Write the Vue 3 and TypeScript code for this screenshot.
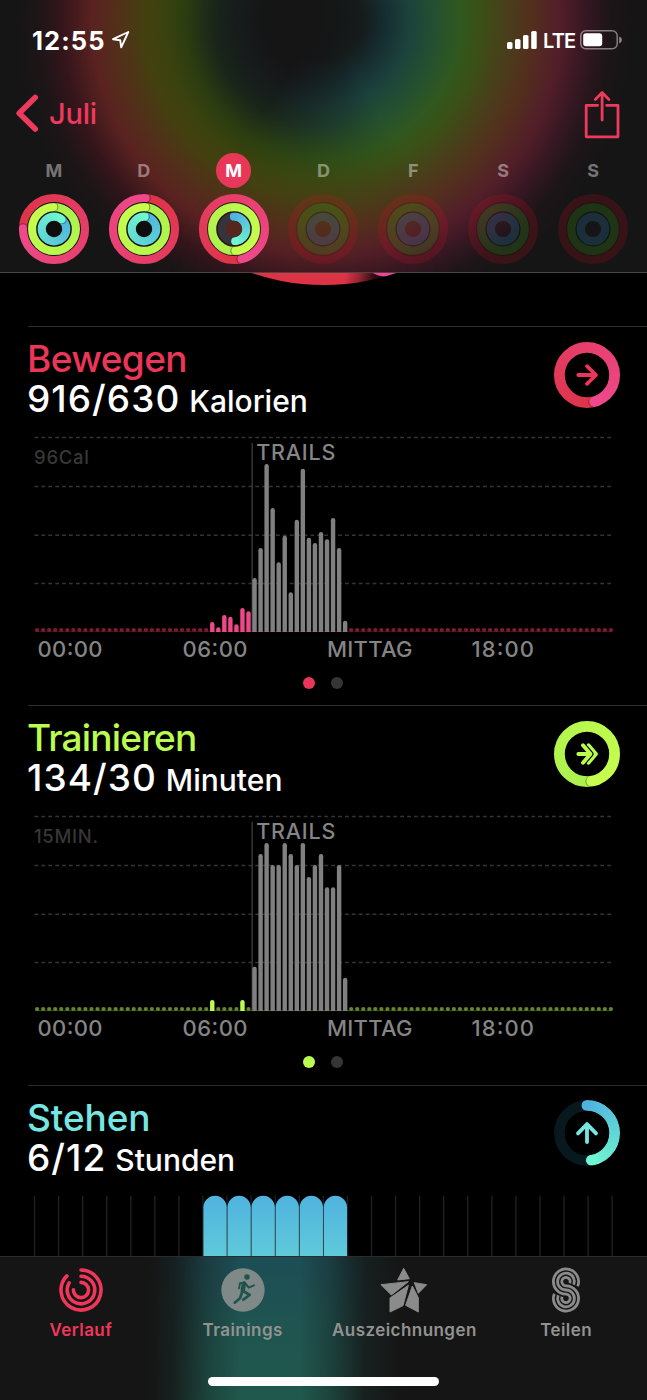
<script setup lang="ts">
type RGB = [number, number, number]
interface Segment { d: string; color: string }
interface RingSpec { r: number; end: number; full: boolean; from: RGB; to: RGB; base: string }
interface Ring extends RingSpec { segments: Segment[]; width: number; tip: [number, number]; shade: [number, number]; start: [number, number] }
interface Bar { index: number; height: number; color: string }

const MOVE: [RGB, RGB] = [[221, 52, 70], [238, 73, 140]]
const EXERCISE: [RGB, RGB] = [[170, 240, 78], [200, 255, 78]]
const STAND: [RGB, RGB] = [[80, 180, 222], [112, 246, 208]]

const point = (r: number, deg: number): [number, number] => {
  const a = (deg * Math.PI) / 180
  return [r * Math.sin(a), -r * Math.cos(a)]
}
const fmt = (p: [number, number]) => `${p[0].toFixed(3)} ${p[1].toFixed(3)}`
const mix = (a: RGB, b: RGB, t: number) => `rgb(${a.map((v, i) => Math.round(v + (b[i] - v) * t)).join(',')})`

function arc(r: number, a: number, b: number): string {
  return `M${fmt(point(r, a))}A${r} ${r} 0 ${b - a > 180 ? 1 : 0} 1 ${fmt(point(r, b))}`
}

function buildRing(spec: RingSpec, width: number): Ring {
  const first = spec.full ? spec.end - 360 : 0
  const span = spec.end - first
  const count = 60
  const segments: Segment[] = []
  for (let i = 0; i < count; i++) {
    const a = first + (span * i) / count
    const b = first + (span * (i + 1)) / count
    segments.push({ d: arc(spec.r, a, Math.min(b + 4, spec.end)), color: mix(spec.from, spec.to, i / (count - 1)) })
  }
  return { ...spec, segments, width, tip: point(spec.r, spec.end), shade: point(spec.r, spec.end + 60 / spec.r), start: point(spec.r, 0) }
}

function spec(r: number, end: number, full: boolean, palette: [RGB, RGB], base = 'none'): RingSpec {
  return { r, end, full, from: palette[0], to: palette[1], base }
}

function dayRings(move: number, exercise: number, stand: number, standFull: boolean): Ring[] {
  return [
    buildRing(spec(31, move, true, MOVE), 8.2),
    buildRing(spec(21.9, exercise, true, EXERCISE), 8.2),
    buildRing(spec(12.3, stand, standFull, STAND, 'rgba(62,74,88,.6)'), 8.2),
  ]
}

const days = [
  { label: 'M', rings: dayRings(271, 358, 38, true), selected: false },
  { label: 'D', rings: dayRings(363, 363, 363, true), selected: false },
  { label: 'M', rings: dayRings(166, 176, 174, false), selected: true },
  { label: 'D', rings: [], selected: false },
  { label: 'F', rings: [], selected: false },
  { label: 'S', rings: [], selected: false },
  { label: 'S', rings: [], selected: false },
]

const moveHeights = [10, 4.7, 17, 15.3, 7.7, 24, 20.7, 54, 84, 168, 124, 69.7, 96.3, 39.7, 112.3, 163.3, 94.3, 89, 100, 92.7, 114, 84, 11.3]
const exerciseHeights = [11, 0, 0, 0, 0, 11, 0, 44.3, 157, 168, 146, 146, 168, 157, 146, 168, 134, 146, 157, 123.7, 123.7, 146, 33.3]
const FIRST = 29
const WORKOUT = 36

function bars(heights: number[], color: string): Bar[] {
  return heights
    .map((height, i) => ({ index: i + FIRST, height, color: i + FIRST >= WORKOUT ? '#808080' : color }))
    .filter((b) => b.height > 0)
}
function idle(list: Bar[]): number[] {
  const used = new Set(list.map((b) => b.index))
  return Array.from({ length: 96 }, (_, i) => i).filter((i) => !used.has(i))
}
const slot = (i: number) => 37.1 + i * 6.04

const moveBars = bars(moveHeights, '#f0468a')
const exerciseBars = bars(exerciseHeights, '#bdfc4f')

const sections = [
  {
    id: 'move', title: 'Bewegen', value: '916/630', unit: 'Kalorien', dot: '#7d1c31',
    scale: '96Cal', scaleWidth: 55, bars: moveBars, idle: idle(moveBars),
    ring: buildRing(spec(27.6, 164, true, MOVE), 10.8),
  },
  {
    id: 'exercise', title: 'Trainieren', value: '134/30', unit: 'Minuten', dot: '#66862b',
    scale: '15MIN.', scaleWidth: 64, bars: exerciseBars, idle: idle(exerciseBars),
    ring: buildRing(spec(27.6, 170, true, EXERCISE), 10.8),
  },
  {
    id: 'stand', title: 'Stehen', value: '6/12', unit: 'Stunden', dot: '', scale: '', scaleWidth: 0,
    bars: [] as Bar[], idle: [] as number[],
    ring: buildRing(spec(27.6, 171, false, STAND, '#07191f'), 10.8),
  },
]

const axis = [
  { text: '00:00', x: 37.5, w: 65 },
  { text: '06:00', x: 182.5, w: 65 },
  { text: 'MITTAG', x: 327, w: 85.5 },
  { text: '18:00', x: 471.5, w: 62.5 },
]
const hours = Array.from({ length: 25 }, (_, i) => 34.5 + i * 24.07)
const standHours = [7, 8, 9, 10, 11, 12]

const tabs = [
  { id: 'history', label: 'Verlauf' },
  { id: 'workouts', label: 'Trainings' },
  { id: 'awards', label: 'Auszeichnungen' },
  { id: 'share', label: 'Teilen' },
]

const historyArcs = [arc(20, 0, 315), arc(13.8, 0, 301), arc(7.6, 0, 272)]
const shareTracks = [12.6, 8.4, 4.2].map((ra) => {
  const rb = 16.8 - ra
  const s = point(ra, 112)
  const e = point(rb, 292)
  return `M${s[0].toFixed(2)} ${(s[1] - 8.4).toFixed(2)}A${ra} ${ra} 0 1 0 0 ${(ra - 8.4).toFixed(2)}A${rb} ${rb} 0 1 1 ${e[0].toFixed(2)} ${(e[1] + 8.4).toFixed(2)}`
})
</script>

<template>
  <div class="phone">
    <header class="header">
      <div class="status">
        <span class="clock">12:55</span>
        <svg class="locate" width="20" height="20" viewBox="0 0 20 20"><path d="M2 9.2 17.3 2 10.2 17.3 9.2 10.2Z" /></svg>
        <svg class="signal" width="31" height="20" viewBox="0 0 31 20">
          <rect x="0" y="12" width="5.5" height="7" rx="1.6" /><rect x="8" y="9" width="5.5" height="10" rx="1.6" />
          <rect x="16" y="5" width="5.5" height="14" rx="1.6" /><rect x="24.2" y="1" width="5.5" height="18" rx="1.6" />
        </svg>
        <span class="carrier">LTE</span>
        <svg class="battery" width="43" height="20" viewBox="0 0 43 20">
          <rect x=".8" y=".8" width="36.4" height="18" rx="5" fill="none" stroke="#fff" stroke-opacity=".45" stroke-width="1.5" />
          <rect x="3.2" y="3.3" width="19" height="13" rx="2.8" fill="#fff" />
          <path d="M39.2 6.6q2.7 1 2.7 3.4t-2.7 3.4z" fill="#fff" fill-opacity=".5" />
        </svg>
      </div>

      <nav class="navbar">
        <a class="back">
          <svg width="26" height="42" viewBox="0 0 26 42"><path d="M20.2 5.5 4.2 21.3 20.2 37" /></svg>
          <span>Juli</span>
        </a>
        <svg class="export" width="38" height="50" viewBox="0 0 38 50">
          <path d="M14.6 15.4H3.2V46.8H35V15.4H23.6M19.1 30V3M12.3 9.4 19.1 2.6 25.9 9.4" />
        </svg>
      </nav>

      <div class="week">
        <div v-for="(day, i) in days" :key="i" class="day">
          <span class="letter" :class="{ selected: day.selected }">{{ day.label }}</span>
          <svg width="72" height="72" viewBox="-36 -36 72 72">
            <template v-if="day.rings.length">
              <circle r="28" :fill="day.selected ? '#2a1516' : '#0d0e0d'" />
              <circle v-if="day.selected" r="8.5" fill="#54261d" />
              <g v-for="(ring, n) in day.rings" :key="n" fill="none">
                <mask :id="`day-${i}-${n}`" maskUnits="userSpaceOnUse" x="-36" y="-36" width="72" height="72">
                  <circle :r="ring.r" fill="none" stroke="#fff" :stroke-width="ring.width" />
                </mask>
                <g :mask="`url(#day-${i}-${n})`" :stroke-width="ring.full ? ring.width + 2 : ring.width">
                  <circle v-if="!ring.full" :r="ring.r" :stroke="ring.base" />
                  <circle v-if="!ring.full" :cx="ring.start[0]" :cy="ring.start[1]" :r="ring.width / 2" :fill="ring.segments[0].color" stroke="none" />
                  <path v-for="(s, k) in ring.segments" :key="k" :d="s.d" :stroke="s.color" />
                  <circle v-if="ring.full" :cx="ring.shade[0]" :cy="ring.shade[1]" :r="ring.width / 2" fill="#000" fill-opacity=".35" stroke="none" />
                  <circle :cx="ring.tip[0]" :cy="ring.tip[1]" :r="ring.width / 2" :fill="ring.segments[59].color" stroke="none" />
                </g>
              </g>
            </template>
            <g v-else fill="none">
              <circle r="30.7" stroke="rgba(235,15,40,.16)" stroke-width="8.6" />
              <circle r="26.4" stroke="rgba(0,0,0,.12)" stroke-width="1.6" />
              <circle r="21.7" stroke="rgba(65,170,25,.21)" stroke-width="8.6" />
              <circle r="16.8" stroke="rgba(0,0,0,.22)" stroke-width="1.4" />
              <circle r="12.3" stroke="rgba(45,140,185,.22)" stroke-width="8.4" />
            </g>
          </svg>
        </div>
      </div>
    </header>

    <main class="content">
      <svg class="peek" width="647" height="54" viewBox="0 272 647 54">
        <defs>
          <linearGradient id="fade" gradientUnits="userSpaceOnUse" x1="347" y1="270" x2="376" y2="276">
            <stop offset="0" stop-color="#dc3345" /><stop offset=".45" stop-color="#9c2534" /><stop offset="1" stop-color="#2a0a0f" />
          </linearGradient>
          <clipPath id="disc"><circle cx="324" cy="55.2" r="229" /></clipPath>
        </defs>
        <circle cx="324" cy="55.2" r="229" fill="url(#fade)" />
        <ellipse cx="387.5" cy="261.5" rx="21" ry="14" fill="#f04590" clip-path="url(#disc)" />
      </svg>

      <section v-for="s in sections" :key="s.id" class="card">
        <div class="heading">
          <div>
            <h2 :class="s.id">{{ s.title }}</h2>
            <p>{{ s.value }} <small>{{ s.unit }}</small></p>
          </div>
          <svg class="goal" width="68" height="68" viewBox="-34 -34 68 68">
            <mask :id="`goal-${s.id}`" maskUnits="userSpaceOnUse" x="-34" y="-34" width="68" height="68">
              <circle :r="s.ring.r" fill="none" stroke="#fff" :stroke-width="s.ring.width" />
            </mask>
            <g fill="none" :mask="`url(#goal-${s.id})`" :stroke-width="s.ring.full ? s.ring.width + 2 : s.ring.width">
              <circle v-if="!s.ring.full" :r="s.ring.r" :stroke="s.ring.base" />
              <circle v-if="!s.ring.full" :cx="s.ring.start[0]" :cy="s.ring.start[1]" r="5.4" :fill="s.ring.segments[0].color" stroke="none" />
              <path v-for="(g, k) in s.ring.segments" :key="k" :d="g.d" :stroke="g.color" />
              <circle v-if="s.ring.full" :cx="s.ring.shade[0]" :cy="s.ring.shade[1]" r="5.4" fill="#000" fill-opacity=".3" stroke="none" />
              <circle :cx="s.ring.tip[0]" :cy="s.ring.tip[1]" r="5.4" :fill="s.ring.segments[59].color" stroke="none" />
            </g>
            <g class="arrow" :class="s.id">
              <path v-if="s.id === 'move'" d="M-8.7 0H8.5M0-8.8 9 0 0 8.8" />
              <template v-else-if="s.id === 'exercise'">
                <path d="M1.5-8.8 9 0 1.5 8.8" />
                <path d="M-4-8.8 3.5 0-4 8.8" class="cut" />
                <path d="M-8.7 0H3M-4-8.8 3.5 0-4 8.8" />
              </template>
              <path v-else d="M0 9V-8.5M-9 .4 0-8.9 9 .4" />
            </g>
          </svg>
        </div>

        <svg v-if="s.scale" class="chart" width="647" height="240" viewBox="0 418 647 240">
          <path class="grid" d="M34.5 437.5H611M34.5 486.5H611M34.5 535.2H611M34.5 583.5H611" />
          <path class="marker" d="M252.2 443V632" />
          <text class="scale" x="34" y="464.4" :textLength="s.scaleWidth">{{ s.scale }}</text>
          <text class="workout" x="256.3" y="459.8" textLength="79">TRAILS</text>
          <circle v-for="i in s.idle" :key="i" :cx="slot(i)" cy="630" r="2.1" :fill="s.dot" />
          <path d="M35 631.6H612" :stroke="s.dot" stroke-width="1" stroke-opacity=".55" />
          <path
            v-for="b in s.bars" :key="b.index" :fill="b.color"
            :d="`M${slot(b.index) - 2.2} 632V${634.2 - b.height}q0-2.2 2.2-2.2t2.2 2.2V632z`"
          />
          <text v-for="a in axis" :key="a.text" class="tick" :x="a.x" y="657.2" :textLength="a.w">{{ a.text }}</text>
        </svg>
        <div v-if="s.scale" class="pager"><i :class="s.id"></i><i></i></div>

        <svg v-else class="chart" width="647" height="84" viewBox="0 1177.2 647 84">
          <defs>
            <linearGradient id="stand" gradientUnits="userSpaceOnUse" x1="0" y1="1196" x2="0" y2="1257">
              <stop offset="0" stop-color="#50b3de" /><stop offset="1" stop-color="#5fcada" />
            </linearGradient>
          </defs>
          <path v-for="x in hours" :key="x" class="hour" :d="`M${x} 1196V1262`" />
          <path v-for="h in standHours" :key="h" fill="url(#stand)" :d="`M${hours[h] + 0.4} 1262V1207.5a11.65 11.5 0 0 1 23.3 0V1262z`" />
        </svg>
      </section>
    </main>

    <footer class="footer">
      <nav class="tabs">
        <a v-for="tab in tabs" :key="tab.id" class="tab" :class="[tab.id, { active: tab.id === 'history' }]">
          <svg v-if="tab.id === 'history'" width="48" height="48" viewBox="-24 -24 48 48">
            <path v-for="d in historyArcs" :key="d" :d="d" fill="none" stroke="#f0375a" stroke-width="3.6" stroke-linecap="round" />
          </svg>
          <svg v-else-if="tab.id === 'workouts'" width="48" height="48" viewBox="-72 -72 144 144">
            <circle r="65" fill="#7f8988" />
            <circle cx="12" cy="-39" r="8.3" fill="#205350" />
            <g fill="none" stroke="#205350" stroke-linecap="round" stroke-linejoin="round">
              <path d="M3-20-1 2" stroke-width="13" />
              <path d="M4-22-9-20-12-5M7-20 17-7 33-14" stroke-width="6" />
              <path d="M1 3 20 15 1 29M-2 4-9 25-25 38" stroke-width="8" />
            </g>
          </svg>
          <svg v-else-if="tab.id === 'awards'" width="50" height="48" viewBox="166 48 150 144">
            <g fill="#8b8b8b" stroke="#8b8b8b" stroke-width="3" stroke-linejoin="round">
              <path d="M240 55 257 86 222 90ZM172 104 254 95 203 135ZM254 106 199 144V186L238 167ZM272 98 309 104 284 130ZM266 108 284 143 284 186 246 166Z" />
            </g>
          </svg>
          <svg v-else width="48" height="48" viewBox="-24 -24 48 48">
            <path v-for="d in shareTracks" :key="d" :d="d" fill="none" stroke="#8b8b8b" stroke-width="2.8" />
          </svg>
          <span>{{ tab.label }}</span>
        </a>
      </nav>
      <div class="home"></div>
    </footer>
  </div>
</template>

<style>
html, body { margin: 0; background: #000; }
</style>

<style scoped>
.phone {
  width: 647px; height: 1400px; overflow: hidden; display: flex; flex-direction: column;
  background: #000; color: #fff; font-family: Inter, "Liberation Sans", sans-serif;
}
.header {
  position: relative; isolation: isolate; box-sizing: border-box; height: 273px; flex: none; overflow: hidden;
  border-bottom: 1px solid #4a4444;
  background: radial-gradient(circle at 324px 20px, #151515 0, #151516 60px, #161b1b 85px, #19241a 109px, #2c3d10 139px, #3a420f 159px, #43400f 179px, #52301a 206px, #5a2220 232px, #34151b 262px, #1d1517 286px, #151515 312px);
}
.header::before {
  content: ""; position: absolute; inset: 0; z-index: -1;
  background: radial-gradient(circle at 324px 20px, #151515 0, #151a1a 38px, #162e31 62px, #1c423c 86px, #255030 112px, #30581f 137px, #3b5016 157px, #46421a 177px, #53301d 206px, #521e29 236px, #351722 262px, #1c1518 286px, #151515 312px);
  -webkit-mask-image: conic-gradient(from 0deg at 324px 20px, #000 0deg, #000 150deg, transparent 215deg, transparent 350deg, #000 360deg);
  mask-image: conic-gradient(from 0deg at 324px 20px, #000 0deg, #000 150deg, transparent 215deg, transparent 350deg, #000 360deg);
}
.status { display: flex; align-items: center; height: 80px; padding: 0 25px 0 32px; box-sizing: border-box; }
.clock { font-size: 25.5px; font-weight: 700; letter-spacing: 1.1px; width: 79px; }
.locate { fill: none; stroke: #fff; stroke-width: 1.9; stroke-linejoin: round; }
.signal { margin-left: auto; fill: #fff; }
.carrier { font-size: 20px; font-weight: 600; letter-spacing: -.8px; margin: 0 6px 0 5px; width: 31px; line-height: 24px; padding-top: 1px; }
.battery { margin-right: -1px; }
.navbar { display: flex; justify-content: space-between; height: 70px; padding: 0 26.5px 0 15px; align-items: flex-start; }
.back { display: flex; align-items: center; height: 42px; margin-top: 12px; color: #ee3a5c; font-size: 29px; font-weight: 500; gap: 8px; letter-spacing: -.2px; }
.back svg { fill: none; stroke: #ee3a5c; stroke-width: 5.6; stroke-linecap: round; stroke-linejoin: round; }
.export { margin-top: 10px; fill: none; stroke: #ee3a5c; stroke-width: 2.8; stroke-linecap: round; stroke-linejoin: round; }
.week { display: flex; justify-content: space-between; padding: 0 9px; margin-top: 3px; }
.day { width: 89.8px; display: flex; flex-direction: column; align-items: center; gap: 5px; }
.letter { width: 35px; height: 35px; line-height: 35px; border-radius: 50%; text-align: center; font-size: 18px; font-weight: 700; color: rgba(255, 255, 255, .42); }
.letter.selected { background: #e93759; color: #fff; }
.content { flex: 1; min-height: 0; overflow: hidden; }
.peek { display: block; height: 53px; }
.card { box-sizing: border-box; height: 379.4px; }
.card::before { content: ""; display: block; height: 1px; margin-left: 28px; background: #2b2b2b; }
.heading { display: flex; justify-content: space-between; height: 91px; box-sizing: border-box; padding: 12px 26.5px 0 28px; }
h2, p { margin: 0; font-weight: 500; font-size: 37px; line-height: 40px; white-space: nowrap; }
h2 { letter-spacing: -.6px; margin-left: -1px; }
p { letter-spacing: 1.05px; margin-left: -1px; }
small { font-size: 30px; letter-spacing: 0; margin-left: -2px; }
h2.move { color: #ea3658; }
h2.exercise { color: #bbfc50; letter-spacing: -.8px; }
h2.stand { color: #76e6e3; letter-spacing: -.1px; }
.goal { margin-top: 1.5px; }
.arrow { fill: none; stroke-width: 3.8; stroke-linecap: round; stroke-linejoin: round; }
.arrow.move { stroke: #ea3658; }
.arrow.exercise { stroke: #bbfc50; }
.arrow.exercise .cut { stroke: #000; stroke-width: 6; }
.arrow.stand { stroke: #76e6e3; }
.chart { display: block; overflow: visible; }
.chart text { font-weight: 500; }
.grid { fill: none; stroke: #343434; stroke-width: 1.4; stroke-dasharray: 3.8 3.1; }
.marker { stroke: #363636; stroke-width: 1.5; }
.scale { fill: #373737; font-size: 18.5px; }
.workout { fill: #858585; font-size: 21.5px; }
.tick { fill: #858585; font-size: 22px; }
.hour { stroke: #202020; stroke-width: 1.4; }
.pager { display: flex; justify-content: center; gap: 15.4px; margin-top: 18.5px; padding-right: 1px; }
.pager i { width: 12px; height: 12px; border-radius: 50%; background: #353535; }
.pager i.move { background: #ea3658; }
.pager i.exercise { background: #bbfc50; }
.footer {
  flex: none; height: 144px; box-sizing: border-box; border-top: 1px solid #2b2d2d;
  background:
    linear-gradient(90deg, #151515 0, #151515 150px, rgba(21, 21, 21, .82) 174px, rgba(21, 21, 21, .3) 208px, rgba(21, 21, 21, 0) 240px, rgba(21, 21, 21, 0) 300px, rgba(21, 21, 21, .3) 330px, rgba(21, 21, 21, .82) 365px, #151515 402px),
    linear-gradient(#1d4d56, #1f5450 45%, #20584c);
}
.tabs { display: flex; }
.tab { flex: 1; display: flex; flex-direction: column; align-items: center; color: #929292; font-size: 17px; font-weight: 600; }
.tab svg { margin-top: 9px; }
.tab span { line-height: 22px; margin-top: 4.5px; letter-spacing: .45px; }
.tab.active { color: #f0375a; }
.home { width: 231px; height: 9px; border-radius: 5px; background: #fff; margin: 36.5px auto 0; }
</style>
